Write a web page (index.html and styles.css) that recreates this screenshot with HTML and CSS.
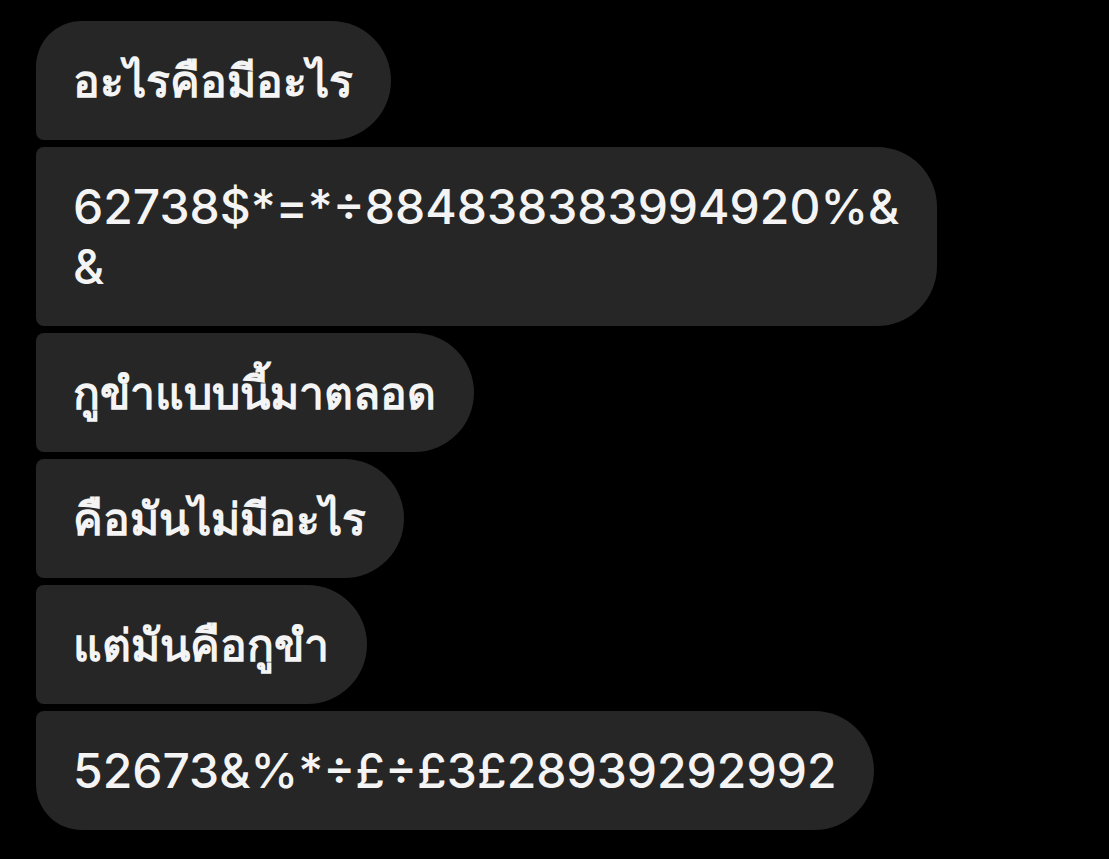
FILE: index.html
```html
<!DOCTYPE html>
<html lang="th">
<head>
    <meta charset="UTF-8">
    <meta name="viewport" content="width=device-width, initial-scale=1.0">
    <title>แชท</title>
    <link rel="stylesheet" href="styles.css">
</head>
<body>
    <div class="thread">
        <div class="bubble thai first">อะไรคือมีอะไร</div>
        <div class="bubble">62738$*=*÷884838383994920%&amp;<br>&amp;</div>
        <div class="bubble thai">กูขำแบบนี้มาตลอด</div>
        <div class="bubble thai">คือมันไม่มีอะไร</div>
        <div class="bubble thai">แต่มันคือกูขำ</div>
        <div class="bubble last">52673&amp;%*÷£÷£3£28939292992</div>
    </div>
</body>
</html>
```

FILE: styles.css
```css
/* Genel */
body {
    margin: 0;
    background: #000;
    color: #f4f4f4;
    font-family: Inter, "Liberation Sans", sans-serif;
}

.thread {
    display: flex;
    flex-direction: column;
    align-items: flex-start;
    gap: 7px;
    padding: 21px 0 0 36px;
}

/* Mesaj balonu */
.bubble {
    background: #262626;
    padding: 30px 38px 29px 37px;
    font-size: 48px;
    line-height: 60px;
    font-weight: 500;
    white-space: nowrap;
    border-radius: 8px 60px 60px 8px;
}

.bubble.thai {
    font-size: 44.5px;
    font-weight: 700;
}

.bubble.first {
    border-top-left-radius: 46px;
}

.bubble.last {
    border-bottom-left-radius: 46px;
}
```
